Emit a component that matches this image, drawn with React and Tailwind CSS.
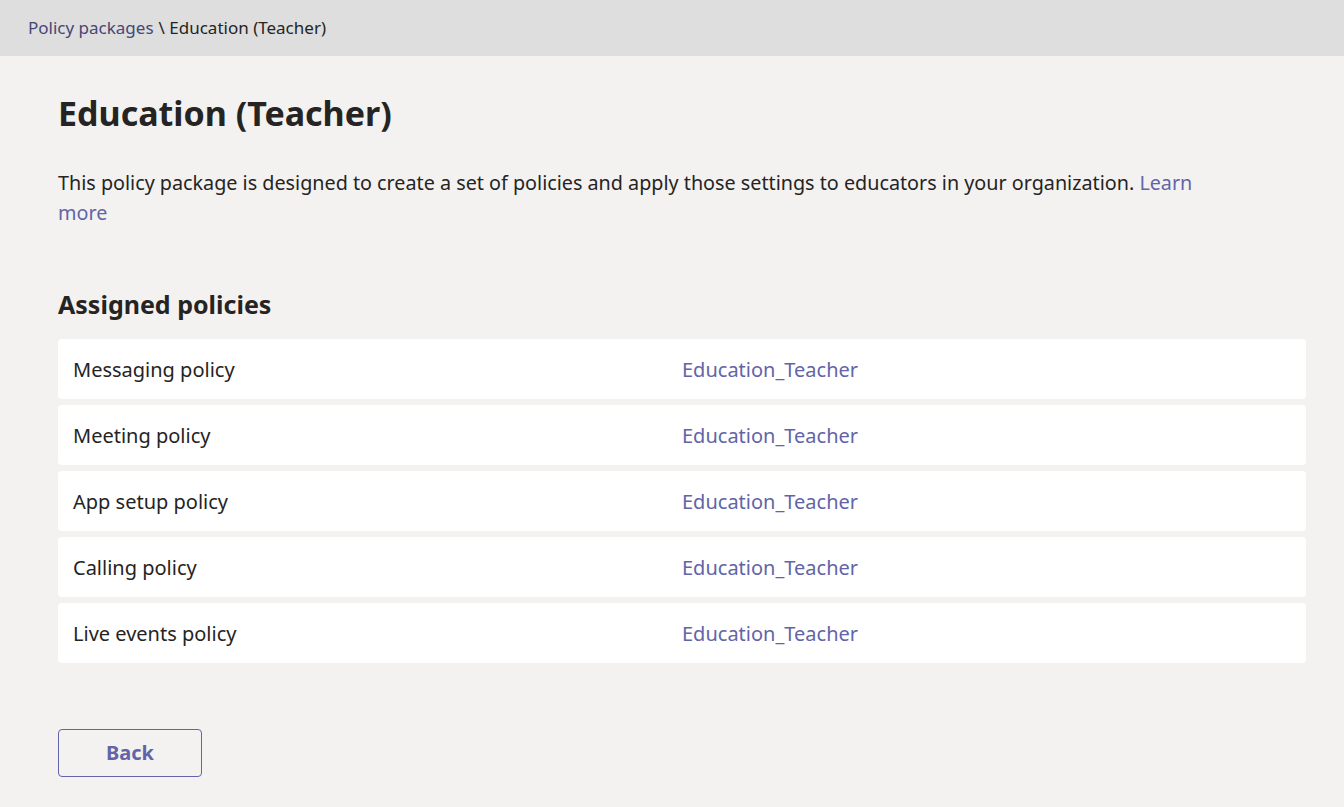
export default function App() {
  const rows = [
    "Messaging policy",
    "Meeting policy",
    "App setup policy",
    "Calling policy",
    "Live events policy",
  ];
  return (
    <div
      className="min-h-[807px] bg-[#f3f2f1] text-[#252423]"
      style={{ fontFamily: '"Noto Sans", "Open Sans", sans-serif' }}
    >
      <div className="h-[56px] bg-[#dedede] flex items-center pl-[28px] text-[17px]">
        <span className="text-[#464775]">Policy packages</span>
        <span className="text-[#252423] ml-[5px]">\ Education (Teacher)</span>
      </div>
      <div className="pl-[58px] pr-[38px]">
        <h1 className="text-[34px] font-bold leading-[40px] mt-[37px]">
          Education (Teacher)
        </h1>
        <p className="text-[19.75px] leading-[30px] mt-[35px] max-w-[1150px]">
          This policy package is designed to create a set of policies and apply those settings to educators in your organization.{" "}
          <span className="text-[#6264a7]">Learn more</span>
        </p>
        <h2 className="text-[25px] font-bold leading-[34px] mt-[59px]">Assigned policies</h2>
        <div className="mt-[18px] flex flex-col gap-[6px] w-[1248px]">
          {rows.map((r) => (
            <div
              key={r}
              className="h-[60px] bg-white rounded-[4px] grid grid-cols-2 items-center px-[15px] pt-[2px] text-[20px]"
            >
              <span>{r}</span>
              <span className="text-[#6264a7]">Education_Teacher</span>
            </div>
          ))}
        </div>
        <button className="mt-[66px] w-[144px] h-[48px] border border-[#6264a7] rounded-[4px] text-[#6264a7] font-bold text-[20px] flex items-center justify-center">
          Back
        </button>
      </div>
    </div>
  );
}
